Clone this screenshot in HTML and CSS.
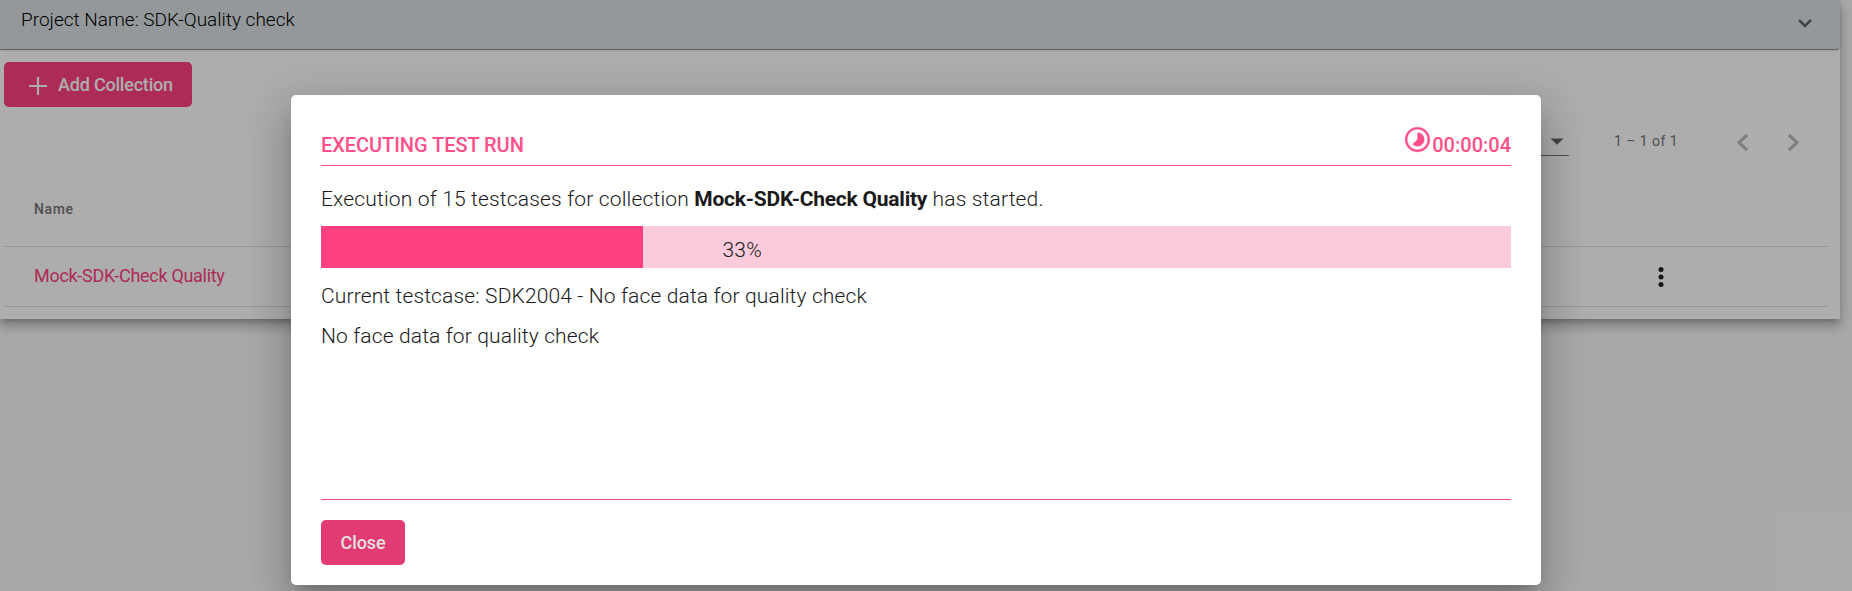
FILE: index.html
```html
<!DOCTYPE html>
<html lang="en">
<head>
<meta charset="utf-8">
<title>Project: SDK-Quality check</title>
<link rel="stylesheet" href="styles.css">
</head>
<body>
<main class="panel">
  <header class="panel-header">
    <span class="project-name">Project Name: SDK-Quality check</span>
    <svg class="chevron" width="14" height="9" viewBox="0 0 14 9"><path d="M1 1l6 6 6-6" fill="none" stroke="currentColor" stroke-width="2.6"/></svg>
  </header>
  <div class="panel-body">
    <button class="btn add-btn">
      <svg width="18" height="18" viewBox="0 0 18 18"><path d="M9 0v18M0 9h18" stroke="currentColor" stroke-width="2.2"/></svg>
      <span class="add-label">Add Collection</span>
    </button>
    <div class="paginator">
      <div class="page-size"><svg width="14" height="7" viewBox="0 0 14 7"><path d="M0.5 0.5h13L7 6.7z" fill="currentColor"/></svg></div>
      <span class="range">1 – 1 of 1</span>
      <svg class="prev" width="11" height="17" viewBox="0 0 11 17"><path d="M10 1L2 8.500l8 7.500" fill="none" stroke="currentColor" stroke-width="3.2"/></svg>
      <svg class="next" width="11" height="17" viewBox="0 0 11 17"><path d="M1 1l8 7.500L1 16" fill="none" stroke="currentColor" stroke-width="3.2"/></svg>
    </div>
    <div class="table">
      <div class="row head-row"><span class="th">Name</span></div>
      <div class="row data-row">
        <a class="link">Mock-SDK-Check Quality</a>
        <svg class="more" width="6" height="20" viewBox="0 0 6 20"><g fill="currentColor"><circle cx="3" cy="2.500" r="2.500"/><circle cx="3" cy="10" r="2.500"/><circle cx="3" cy="17.500" r="2.500"/></g></svg>
      </div>
    </div>
  </div>
</main>
<div class="overlay">
  <section class="dialog">
    <div class="dialog-head">
      <span class="title">EXECUTING TEST RUN</span>
      <span class="timer">
        <svg width="27" height="27" viewBox="0 0 24 24"><path fill="currentColor" stroke="currentColor" stroke-width=".3" d="M16.240 7.760C15.070 6.590 13.540 6 12 6v6l-4.240 4.240c2.340 2.340 6.140 2.340 8.490 0 2.340-2.340 2.340-6.140-.01-8.480zM12 1C5.920 1 1 5.920 1 12s4.920 11 11 11 11-4.920 11-11S18.080 1 12 1zm0 20.100c-5.030 0-9.100-4.070-9.100-9.100S6.970 2.900 12 2.900s9.100 4.070 9.100 9.100-4.070 9.100-9.100 9.100z"/></svg>
        <span class="time">00:00:04</span>
      </span>
    </div>
    <p class="message">Execution of 15 testcases for collection <b class="collection">Mock-SDK-Check Quality</b> has started.</p>
    <div class="progress"><div class="bar"></div><span class="percent">33%</span></div>
    <p class="current">Current testcase: SDK2004 - No face data for quality check</p>
    <p class="detail">No face data for quality check</p>
    <div class="dialog-foot"><button class="btn close-btn"><span class="close-label">Close</span></button></div>
  </section>
</div>
</body>
</html>
```
FILE: styles.css
```css
* { box-sizing: border-box; }
html, body { height: 100%; overflow: hidden; }
body { margin: 0; background: #fafafa; font-family: Roboto, sans-serif; color: #1a1a1a; }
svg { display: block; flex: none; }
p { margin: 0; }
.panel {
  width: 1840px; height: 319px; background: #fff;
  box-shadow: 0 5px 5px -3px rgba(0,0,0,.2), 0 8px 10px 1px rgba(0,0,0,.14), 0 3px 14px 2px rgba(0,0,0,.12);
}
.panel-header {
  height: 49px; padding: 0 28px 10px 21px; display: flex; align-items: center; justify-content: space-between;
  background: #dae0e3; border-radius: 0 0 4px 0;
  box-shadow: 0 2px 1px -1px rgba(0,0,0,.2), 0 1px 1px rgba(0,0,0,.14), 0 1px 3px rgba(0,0,0,.12), 0 1px 0 rgba(0,0,0,.15);
}
.project-name { font-size: 19px; font-weight: 300; white-space: nowrap; color: #000; }
.chevron { color: #666; margin-top: 8px; }
.panel-body { padding: 13px 12px 0 4px; }
.btn { border: 0; border-radius: 5px; height: 45px; display: flex; align-items: center; font: 500 18px Roboto, sans-serif; color: #fff; background: #ff4081; }
.add-btn { width: 188px; padding: 0 0 0 25px; gap: 11px; letter-spacing: -.2px; }
.add-btn svg { margin-top: 3px; }
.paginator { height: 64px; display: flex; align-items: center; justify-content: flex-end; padding: 3px 29px 0 0; color: #757575; }
.page-size { width: 60px; height: 30px; padding: 12px 5px 0 0; display: flex; justify-content: flex-end; border-bottom: 1px solid #777; color: #666; margin-right: 45px; }
.range { font-size: 14px; letter-spacing: .45px; margin-right: 59px; }
.prev, .next { color: #bdbdbd; margin-top: 3px; }
.prev { margin-right: 40px; }
.row { display: flex; align-items: center; justify-content: space-between; padding: 0 164px 0 30px; border-bottom: 1px solid #dedede; }
.head-row { height: 76px; }
.th { font-size: 14px; font-weight: 500; color: #757575; letter-spacing: .6px; }
.data-row { height: 60px; }
.link { font-size: 18px; color: #ff4081; letter-spacing: -.3px; margin-top: -2px; }
.more { color: #212121; }
.overlay { position: absolute; inset: 0; background: rgba(0,0,0,.32); padding: 95px 0 0 291px; }
.dialog {
  width: 1250px; height: 490px; padding: 30px; border-radius: 5px; background: #fff;
  display: flex; flex-direction: column; font-size: 21px; font-weight: 300; line-height: 24px;
  box-shadow: 0 11px 15px -7px rgba(0,0,0,.2), 0 24px 38px 3px rgba(0,0,0,.14), 0 9px 46px 8px rgba(0,0,0,.12);
}
.dialog-head { height: 41px; display: flex; justify-content: space-between; border-bottom: 1px solid #ff4f8a; color: #ff4f8a; font-size: 20px; font-weight: 500; }
.title, .time { padding-top: 8px; white-space: nowrap; }
.title { letter-spacing: -.05px; }
.timer { display: flex; gap: 1px; }
.timer svg { margin-top: 1px; }
.message { padding-top: 21px; height: 60px; white-space: nowrap; letter-spacing: .17px; }
.collection { font-weight: 700; letter-spacing: -.23px; }
.progress { height: 42px; display: flex; align-items: center; background: #fbcbdb; }
.bar { width: 321.500px; height: 100%; background: #ff4081; }
.percent { margin-left: 80px; padding-top: 5px; letter-spacing: .2px; }
.current { padding-top: 16px; letter-spacing: .14px; }
.detail { padding-top: 16px; letter-spacing: .14px; }
.dialog-foot { margin-top: auto; height: 66px; border-top: 1px solid #f24886; padding-top: 20px; margin-bottom: -10px; }
.close-btn { width: 84px; margin: 0; padding: 0; justify-content: center; background: #e23a72; color: #e2e2e2; letter-spacing: -.1px; }
```
